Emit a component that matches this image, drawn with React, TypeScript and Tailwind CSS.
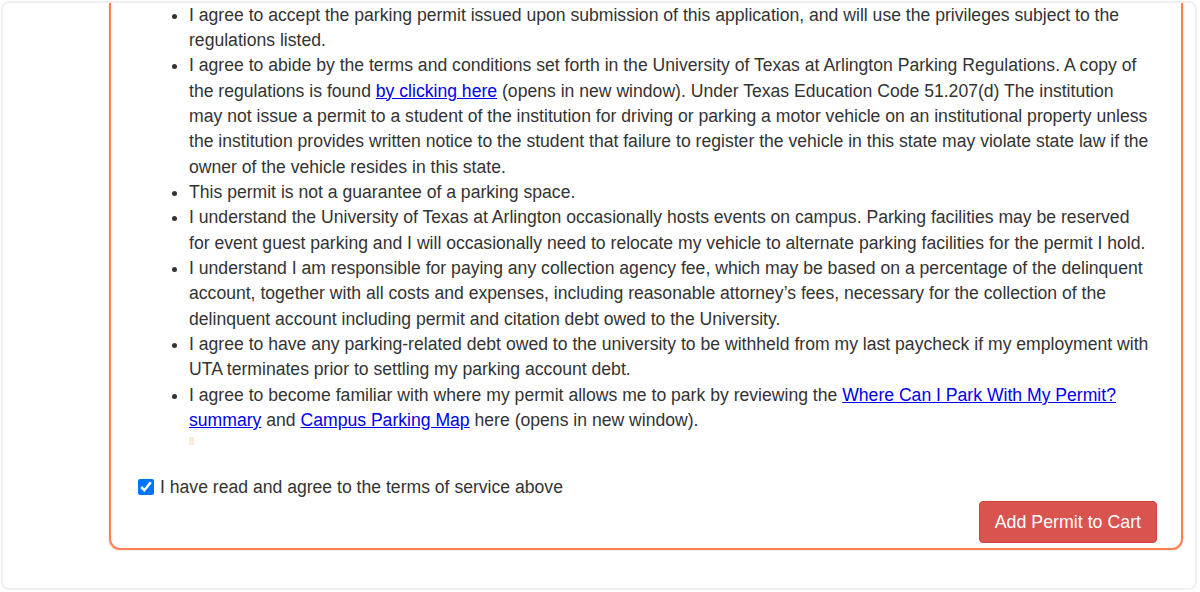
import React from "react";

const A = ({ children }: { children: React.ReactNode }) => (
  <a href="#" className="text-[#0000ee] underline">
    {children}
  </a>
);

export default function App() {
  return (
    <div
      className="w-[1200px] h-[592px] bg-white pt-px pl-px overflow-hidden text-[#333333]"
      style={{ fontFamily: '"Liberation Sans", Arial, sans-serif' }}
    >
      <div className="w-[1196px] h-[589px] border-2 border-[#efeff4] rounded-lg overflow-hidden bg-white">
        <div className="ml-[106px] mr-[12px] -mt-[20px] border-2 border-[#ff7f50] rounded-[11px] shadow-[0_0_1px_#ff7f50] pt-[17.5px] pl-[27px] pr-[24px] pb-[5px]">
          <ul className="list-disc pl-[51px] text-[17.6px] leading-[25.35px] whitespace-nowrap">
            <li>
              I agree to accept the parking permit issued upon submission of this application, and will use the
              privileges subject to the
              <br />
              regulations listed.
            </li>
            <li>
              I agree to abide by the terms and conditions set forth in the University of Texas at Arlington Parking
              Regulations. A copy of
              <br />
              the regulations is found <A>by clicking here</A> (opens in new window). Under Texas Education Code
              51.207(d) The institution
              <br />
              may not issue a permit to a student of the institution for driving or parking a motor vehicle on an
              institutional property unless
              <br />
              the institution provides written notice to the student that failure to register the vehicle in this state
              may violate state law if the
              <br />
              owner of the vehicle resides in this state.
            </li>
            <li>This permit is not a guarantee of a parking space.</li>
            <li>
              I understand the University of Texas at Arlington occasionally hosts events on campus. Parking facilities
              may be reserved
              <br />
              for event guest parking and I will occasionally need to relocate my vehicle to alternate parking
              facilities for the permit I hold.
            </li>
            <li>
              I understand I am responsible for paying any collection agency fee, which may be based on a percentage of
              the delinquent
              <br />
              account, together with all costs and expenses, including reasonable attorney’s fees, necessary for the
              collection of the
              <br />
              delinquent account including permit and citation debt owed to the University.
            </li>
            <li>
              I agree to have any parking-related debt owed to the university to be withheld from my last paycheck if
              my employment with
              <br />
              UTA terminates prior to settling my parking account debt.
            </li>
            <li>
              I agree to become familiar with where my permit allows me to park by reviewing the{" "}
              <A>
                Where Can I Park With My Permit?
                <br />
                summary
              </A>{" "}
              and <A>Campus Parking Map</A> here (opens in new window).
            </li>
          </ul>
          <div className="ml-[51px] mt-[4px] w-[5px] h-[8px] bg-[#fbe9d9]" />
          <label className="mt-[29px] flex items-center h-[25px] text-[17.6px]">
            <input
              type="checkbox"
              checked
              readOnly
              className="w-4 h-4 mr-[6px] accent-[#0075ff]"
            />
            I have read and agree to the terms of service above
          </label>
          <div className="mt-[1.5px] flex justify-end">
            <button className="h-[42px] px-[15px] rounded bg-[#d9534f] border border-[#d43f3a] text-white text-[17.8px]">
              Add Permit to Cart
            </button>
          </div>
        </div>
      </div>
    </div>
  );
}
